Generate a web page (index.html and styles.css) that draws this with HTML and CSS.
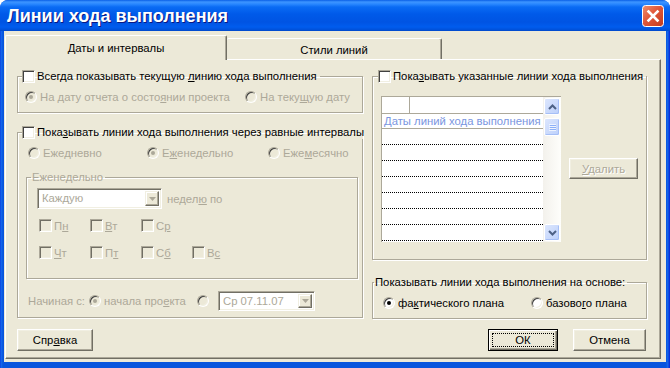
FILE: index.html
```html
<!DOCTYPE html>
<html lang="ru">
<head>
  <meta charset="UTF-8">
  <title>Линии хода выполнения</title>
  <link rel="stylesheet" href="styles.css">
</head>
<body>
  <div class="window">
    <!-- Title bar -->
    <div class="titlebar">
      <span class="title">Линии хода выполнения</span>
      <span class="close">
        <svg width="22" height="22" viewBox="0 0 22 22">
          <defs>
            <linearGradient id="cg" x1="0" y1="0" x2="1" y2="1">
              <stop offset="0" stop-color="#f0906c"/>
              <stop offset="0.45" stop-color="#e0573a"/>
              <stop offset="1" stop-color="#c23a1c"/>
            </linearGradient>
          </defs>
          <rect x="0.5" y="0.5" width="21" height="21" rx="3" fill="url(#cg)" stroke="#fff"/>
          <path d="M6.5 6.5 L15.5 15.5 M15.5 6.5 L6.5 15.5" stroke="#fff" stroke-width="2.6" stroke-linecap="square"/>
        </svg>
      </span>
    </div>

    <div class="client">
      <!-- Tabs -->
      <div class="tabs">
        <div class="tab active">Даты и интервалы</div>
        <div class="tab">Стили линий</div>
      </div>

      <div class="panel">
        <div class="columns">
          <!-- Left column -->
          <div class="col">
            <fieldset class="group group-a">
              <legend class="check-legend"><span class="check"></span><span>Всегда показывать текущую <u>л</u>инию хода выполнения</span></legend>
              <div class="opt-row">
                <span class="opt off w220"><span class="radio on"></span><span>На дату отчета о состо<u>я</u>нии проекта</span></span>
                <span class="opt off"><span class="radio"></span><span>На теку<u>щ</u>ую дату</span></span>
              </div>
            </fieldset>

            <fieldset class="group group-b">
              <legend class="check-legend"><span class="check"></span><span>Пока<u>з</u>ывать линии хода выполнения через равные интервалы</span></legend>
              <div class="opt-row freq">
                <span class="opt off w119"><span class="radio"></span><span>Еже<u>д</u>невно</span></span>
                <span class="opt off w121"><span class="radio on"></span><span>Е<u>ж</u>енедельно</span></span>
                <span class="opt off"><span class="radio"></span><span>Еже<u>м</u>есячно</span></span>
              </div>

              <fieldset class="group group-week">
                <legend class="text-legend off">Еженедельно</legend>
                <div class="every">
                  <div class="combo w125"><span class="combo-text">Каждую</span><span class="drop"><svg width="7" height="4" viewBox="0 0 7 4"><path d="M0 0h7L3.5 4z" fill="#aca899"/></svg></span></div>
                  <span class="off">недел<u>ю</u> по</span>
                </div>
                <div class="days">
                  <span class="day off"><span class="check dim"></span><span>П<u>н</u></span></span>
                  <span class="day off"><span class="check dim"></span><span><u>В</u>т</span></span>
                  <span class="day off"><span class="check dim"></span><span>С<u>р</u></span></span>
                </div>
                <div class="days">
                  <span class="day off"><span class="check dim"></span><span><u>Ч</u>т</span></span>
                  <span class="day off"><span class="check dim"></span><span>П<u>т</u></span></span>
                  <span class="day off"><span class="check dim"></span><span>С<u>б</u></span></span>
                  <span class="day off"><span class="check dim"></span><span>В<u>с</u></span></span>
                </div>
              </fieldset>

              <div class="start-row">
                <span class="off start-label">Начиная с:</span>
                <span class="opt off w108"><span class="radio on"></span><span>начала про<u>е</u>кта</span></span>
                <span class="radio gap9"></span>
                <div class="combo w97"><span class="combo-text">Ср 07.11.07</span><span class="drop"><svg width="7" height="4" viewBox="0 0 7 4"><path d="M0 0h7L3.5 4z" fill="#aca899"/></svg></span></div>
              </div>
            </fieldset>
          </div>

          <!-- Right column -->
          <div class="col">
            <fieldset class="group group-c">
              <legend class="check-legend"><span class="check"></span><span>Пока<u>з</u>ывать указанные линии хода выполнения</span></legend>
              <div class="list-area">
                <div class="grid">
                  <div class="grid-body">
                    <div class="grid-head"><span class="corner"></span><span></span></div>
                    <div class="grid-title">Даты линий хода выполнения</div>
                    <div class="grid-row"></div>
                    <div class="grid-row"></div>
                    <div class="grid-row"></div>
                    <div class="grid-row"></div>
                    <div class="grid-row"></div>
                    <div class="grid-row"></div>
                    <div class="grid-row"></div>
                  </div>
                  <div class="scrollbar">
                    <span class="sb-btn"><svg width="9" height="6" viewBox="0 0 9 6"><path d="M1 5 L4.5 1.5 L8 5" fill="none" stroke="#4d6185" stroke-width="2"/></svg></span>
                    <span class="sb-thumb"><svg width="7" height="7" viewBox="0 0 7 7"><path d="M0 .5h7M0 2.5h7M0 4.5h7M0 6.5h7" stroke="#eef3fe"/><path d="M1 1.5h7M1 3.5h7M1 5.5h7" stroke="#8cb0f8"/></svg></span>
                    <span class="sb-track"></span>
                    <span class="sb-btn"><svg width="9" height="6" viewBox="0 0 9 6"><path d="M1 1 L4.5 4.5 L8 1" fill="none" stroke="#4d6185" stroke-width="2"/></svg></span>
                  </div>
                </div>
                <span class="btn disabled del"><span><u>У</u>далить</span></span>
              </div>
            </fieldset>

            <fieldset class="group group-d">
              <legend class="text-legend">Показывать линии хода выполнения на основе:</legend>
              <div class="opt-row">
                <span class="opt w148"><span class="radio white on"></span><span>фа<u>к</u>тического плана</span></span>
                <span class="opt"><span class="radio white"></span><span>базово<u>г</u>о плана</span></span>
              </div>
            </fieldset>
          </div>
        </div>

        <!-- Bottom buttons -->
        <div class="buttons">
          <span class="btn help"><span>Спр<u>а</u>вка</span></span>
          <div class="btn-pair">
            <span class="btn default"><span class="focus">ОК</span></span>
            <span class="btn cancel"><span>Отмена</span></span>
          </div>
        </div>
      </div>
    </div>
  </div>
</body>
</html>
```

FILE: styles.css
```css
/* Reset */
* {
  margin: 0;
  padding: 0;
  box-sizing: border-box;
}

body {
  background: #fff;
  font-family: "Liberation Sans", Arial, sans-serif;
  font-size: 11.3px;
  color: #000;
}

u {
  text-decoration: underline;
  text-underline-offset: 1px;
}

/* Window frame */
.window {
  width: 670px;
  height: 368px;
  background: linear-gradient(to right, #0831d9 0, #166aee 1px, #0855dd 3px, #0855dd 666px, #166aee 668px, #0831d9 669px);
  border-radius: 8px 8px 0 0;
  overflow: hidden;
  display: flex;
  flex-direction: column;
}

.titlebar {
  height: 31px;
  flex: none;
  display: flex;
  align-items: center;
  justify-content: space-between;
  padding: 0 6px 0 7px;
  background: linear-gradient(to bottom, #0a5fe6 0, #3d95ff 2px, #2a88ff 4px, #0a6bf4 7px, #005ae9 14px, #0054e3 22px, #005cee 27px, #0050d8 30px, #0046c8 31px);
}

.title {
  color: #fff;
  font-weight: bold;
  font-size: 18px;
  text-shadow: 1px 1px 0 #0a1883;
  margin-top: 1px;
}

.close {
  display: flex;
  margin-top: 1px;
}

.client {
  flex: 1;
  margin: 0 4px 6px 4px;
  background: #ece9d8;
  display: flex;
  flex-direction: column;
}

/* Tabs */
.tabs {
  height: 28px;
  flex: none;
  display: flex;
  align-items: flex-end;
  padding-left: 1px;
}

.tab {
  height: 21px;
  width: 215px;
  display: flex;
  align-items: center;
  justify-content: center;
  background: #ece9d8;
  border-top: 1px solid #fff;
  border-right: 1px solid #716f64;
  box-shadow: inset -1px 0 #aca899;
  border-radius: 2px 2px 0 0;
  padding-top: 1px;
}

.tab.active {
  position: relative;
  z-index: 1;
  width: 222px;
  height: 25px;
  margin-bottom: -1px;
  border-left: 1px solid #fff;
  padding-bottom: 2px;
}

.panel {
  height: 300px;
  margin: 0 5px 0 1px;
  border: 1px solid;
  border-color: #fff #716f64 #716f64 #fff;
  box-shadow: inset -1px -1px #aca899;
  padding: 10px 0 0 11px;
}

.columns {
  display: grid;
  grid-template-columns: 346px 275px;
  column-gap: 9px;
  align-items: start;
}

/* Group boxes */
.group {
  border: 1px solid #aca899;
  box-shadow: inset 1px 1px #fff, 1px 1px #fff;
  min-width: 0;
}

.check-legend {
  display: flex;
  align-items: center;
  gap: 2px;
  height: 13px;
  line-height: 13px;
  padding-right: 3px;
  white-space: nowrap;
}

.text-legend {
  height: 13px;
  line-height: 13px;
  padding: 0 2px 0 1px;
  white-space: nowrap;
}

.off {
  color: #aca899;
}

.check {
  width: 13px;
  height: 13px;
  flex: none;
  border: 1px solid;
  border-color: #aca899 #fff #fff #aca899;
  box-shadow: inset 1px 1px #404040, inset -1px -1px #f1efe2;
  background: #fff;
}

.check.dim {
  background: #ece9d8;
  box-shadow: inset 1px 1px #716f64, inset -1px -1px #f1efe2;
}

.radio {
  width: 12px;
  height: 12px;
  flex: none;
  border-radius: 50%;
  border: 1px solid;
  border-color: #aca899 #fff #fff #aca899;
  box-shadow: inset 1px 1px #404040, inset -1px -1px #f1efe2;
  background: #ece9d8;
  display: flex;
  align-items: center;
  justify-content: center;
}

.radio.white {
  background: #fff;
}

.radio.on::after {
  content: "";
  width: 4px;
  height: 4px;
  border-radius: 50%;
  background: #aca899;
}

.radio.white.on::after {
  background: #000;
}

.opt-row {
  display: flex;
  align-items: center;
  height: 13px;
}

.opt {
  display: flex;
  align-items: center;
  gap: 3px;
  white-space: nowrap;
}

.w220 { width: 220px; }
.w119 { width: 119px; }
.w121 { width: 121px; }
.w108 { width: 108px; }
.w148 { width: 148px; }

/* Group A */
.group-a {
  padding: 7px 7px 9px;
}

.group-a legend {
  margin-left: -3px;
}

/* Group B */
.group-b {
  margin-top: 13px;
  padding: 7px 4px 6px;
}

.freq {
  padding-left: 6px;
}

.group-week {
  margin: 12px 0 0 4px;
  width: 332px;
  padding: 4px 10px 19px;
}

.group-week legend {
  margin-left: -6px;
}

.every {
  display: flex;
  align-items: center;
  gap: 5px;
}

.combo {
  height: 21px;
  display: flex;
  border: 1px solid;
  border-color: #aca899 #fff #fff #aca899;
  box-shadow: inset 1px 1px #716f64, inset -1px -1px #f1efe2;
  background: #fff;
  padding: 2px;
}

.w125 { width: 125px; }
.w97 { width: 97px; height: 20px; }

.combo-text {
  flex: 1;
  color: #aca899;
  padding-left: 2px;
  line-height: 15px;
}

.drop {
  width: 14px;
  flex: none;
  background: #ece9d8;
  border: 1px solid;
  border-color: #f1efe2 #716f64 #716f64 #f1efe2;
  box-shadow: inset -1px -1px #aca899, inset 1px 1px #fff;
  display: flex;
  align-items: center;
  justify-content: center;
}

.days {
  display: flex;
  align-items: center;
  height: 13px;
  margin-top: 10px;
  padding-left: 2px;
}

.days + .days {
  margin-top: 14px;
}

.day {
  width: 51px;
  display: flex;
  align-items: center;
  gap: 2px;
}

.start-row {
  display: flex;
  align-items: center;
  height: 21px;
  margin-top: 11px;
  padding-left: 6px;
}

.start-label {
  width: 61px;
  white-space: nowrap;
}

.gap9 {
  margin-right: 9px;
}

/* Group C */
.group-c {
  padding: 13px 8px 17px;
}

.group-c legend {
  margin-left: -3px;
}

.list-area {
  display: flex;
  align-items: flex-start;
  gap: 8px;
}

.grid {
  width: 180px;
  height: 146px;
  display: flex;
  border-top: 1px solid #aca899;
  border-left: 1px solid #aca899;
  background: #fff;
}

.grid-body {
  flex: 1;
}

.grid-head {
  height: 17px;
  display: flex;
  border-bottom: 1px solid #aca899;
}

.corner {
  width: 28px;
  border-right: 1px solid #aca899;
}

.grid-title {
  height: 15px;
  line-height: 14px;
  padding-left: 2px;
  color: #7a96df;
  white-space: nowrap;
  border-bottom: 1px solid #aca899;
}

.grid-row {
  height: 16px;
  border-bottom: 1px dotted #000;
}

.scrollbar {
  width: 18px;
  display: flex;
  flex-direction: column;
  background: linear-gradient(to right, #f3f1ec, #fefefb);
  padding: 1px;
}

.sb-btn,
.sb-thumb {
  height: 17px;
  flex: none;
  display: flex;
  align-items: center;
  justify-content: center;
  border: 1px solid #fff;
  border-radius: 2px;
  background: linear-gradient(to bottom right, #dce6fd, #bcd0fb);
  box-shadow: inset -1px -1px #a6bff6;
}

.sb-thumb {
  margin-top: 3px;
  height: 18px;
}

.sb-track {
  flex: 1;
}

/* Buttons */
.btn {
  height: 22px;
  display: flex;
  align-items: center;
  justify-content: center;
  background: #ece9d8;
  border: 1px solid;
  border-color: #fff #716f64 #716f64 #fff;
  box-shadow: inset -1px -1px #aca899, inset 1px 1px #f1efe2;
}

.btn.disabled {
  color: #aca899;
  text-shadow: 1px 1px 0 #fff;
}

.del {
  width: 69px;
  height: 21px;
  margin-top: 62px;
}

.buttons {
  display: flex;
  justify-content: space-between;
  margin-top: 10px;
  padding-right: 14px;
}

.help {
  width: 76px;
}

.btn-pair {
  display: flex;
  gap: 15px;
}

.default {
  width: 70px;
  border: 1px solid #000;
  box-shadow: inset 1px 1px #fff, inset -1px -1px #716f64, inset -2px -2px #aca899;
  padding: 3px;
}

.focus {
  flex: 1;
  align-self: stretch;
  border: 1px dotted #000;
  display: flex;
  align-items: center;
  justify-content: center;
}

.cancel {
  width: 73px;
}

/* Group D */
.group-d {
  margin-top: 16px;
  padding: 7px 8px 9px 10px;
}

.group-d legend {
  margin-left: -9px;
}
```
